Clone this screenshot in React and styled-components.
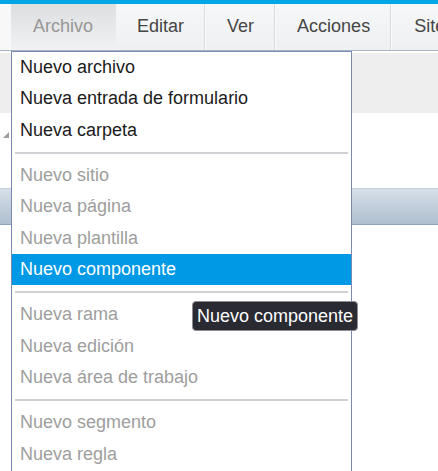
import React from 'react';
import styled, { createGlobalStyle } from 'styled-components';

const GlobalStyle = createGlobalStyle`
html, body {
    margin:0;
    padding:0;
    background:#ffffff;
}
body {
    font-family:"Liberation Sans", Arial, sans-serif;
}
`;

const menus = [
    { label: 'Archivo', active: true },
    { label: 'Editar' },
    { label: 'Ver' },
    { label: 'Acciones' },
    { label: 'Sites', last: true },
];

const groups = [
    [
        { label: 'Nuevo archivo' },
        { label: 'Nueva entrada de formulario' },
        { label: 'Nueva carpeta' },
    ],
    [
        { label: 'Nuevo sitio', disabled: true },
        { label: 'Nueva página', disabled: true },
        { label: 'Nueva plantilla', disabled: true },
        { label: 'Nuevo componente', selected: true },
    ],
    [
        { label: 'Nueva rama', disabled: true },
        { label: 'Nueva edición', disabled: true },
        { label: 'Nueva área de trabajo', disabled: true },
    ],
    [
        { label: 'Nuevo segmento', disabled: true },
        { label: 'Nueva regla', disabled: true },
    ],
];

const App = () => {
    return (
        <Page>
            <GlobalStyle />
            <TopStrip />
            <MenuBar>
                <MenuLead />
                {menus.map(m => (
                    <MenuButton key={m.label} active={m.active} last={m.last}>
                        {m.label}
                    </MenuButton>
                ))}
            </MenuBar>
            <Gap />
            <Panel />
            <TreeArea>
                <Expander viewBox="0 0 6 6" width="6" height="6">
                    <path d="M6 0 L6 6 L0 6 Z" fill="#9c9c9c" />
                </Expander>
            </TreeArea>
            <HeaderBar />

            <Dropdown>
                {groups.map((group, gi) => (
                    <React.Fragment key={gi}>
                        {gi > 0 && <Separator />}
                        {group.map(item => (
                            <Item key={item.label} disabled={item.disabled} selected={item.selected}>
                                {item.label}
                            </Item>
                        ))}
                    </React.Fragment>
                ))}
            </Dropdown>
            <Tooltip>Nuevo componente</Tooltip>
        </Page>
    );
};

const Page = styled.div`
position:relative;
width:438px;
height:471px;
overflow:hidden;
background:#ffffff;
`;

const TopStrip = styled.div`
height:4px;
background:#00a6e6;
`;

const MenuBar = styled.div`
display:flex;
height:46px;
background:linear-gradient(#f6f7f8, #eef0f2);
border-bottom:1px solid #a9b3c6;
white-space:nowrap;
`;

const MenuLead = styled.div`
width:11px;
flex:none;
background:#f8f8f9;
`;

const MenuButton = styled.div`
flex:none;
display:flex;
align-items:center;
padding:${p => (p.active ? '0 23px 2px 22px' : p.last ? '0 20px 2px 22px' : '0 20px 2px 21px')};
font-size:18px;
color:${p => (p.active ? '#979797' : '#454545')};
background:${p => (p.active ? 'linear-gradient(#dcdedf, #f1f2f3)' : 'transparent')};
border-right:${p => (p.active || p.last ? 'none' : '1px solid #d9dbdd')};
box-shadow:${p => (p.active || p.last ? 'none' : '1px 0 0 #fbfbfb')};
margin-right:${p => (p.active || p.last ? '0' : '1px')};
`;

const Gap = styled.div`
height:2px;
`;

const Panel = styled.div`
height:60px;
background:#eeeeee;
`;

const TreeArea = styled.div`
height:75px;
padding:19px 0 0 3px;
box-sizing:border-box;
`;

const Expander = styled.svg`
display:block;
`;

const HeaderBar = styled.div`
height:37px;
box-sizing:border-box;
border-top:1px solid #c4d0dc;
border-bottom:1px solid #8fa3b9;
background:linear-gradient(#d6dfe8, #aebfd0);
`;

const Dropdown = styled.div`
position:absolute;
top:51px;
left:11px;
width:341px;
height:440px;
box-sizing:border-box;
border:1px solid #7c89b1;
background:#ffffff;
`;

const Item = styled.div`
height:31.33px;
line-height:30.33px;
padding:0 0 1px 8px;
box-sizing:border-box;
font-size:18px;
white-space:nowrap;
color:${p => (p.selected ? '#ffffff' : p.disabled ? '#9e9e9e' : '#1b1b1b')};
background:${p => (p.selected ? '#0099e6' : 'transparent')};
`;

const Separator = styled.div`
height:2px;
margin:6px 3px 6px 3px;
background:#d0d0d5;
`;

const Tooltip = styled.div`
position:absolute;
left:192px;
top:301px;
height:30px;
box-sizing:border-box;
padding:0 4px;
line-height:28px;
font-size:18px;
color:#ffffff;
background:#2a2a33;
border:1px solid #8c8c92;
border-radius:4px;
white-space:nowrap;
`;

export default App;
